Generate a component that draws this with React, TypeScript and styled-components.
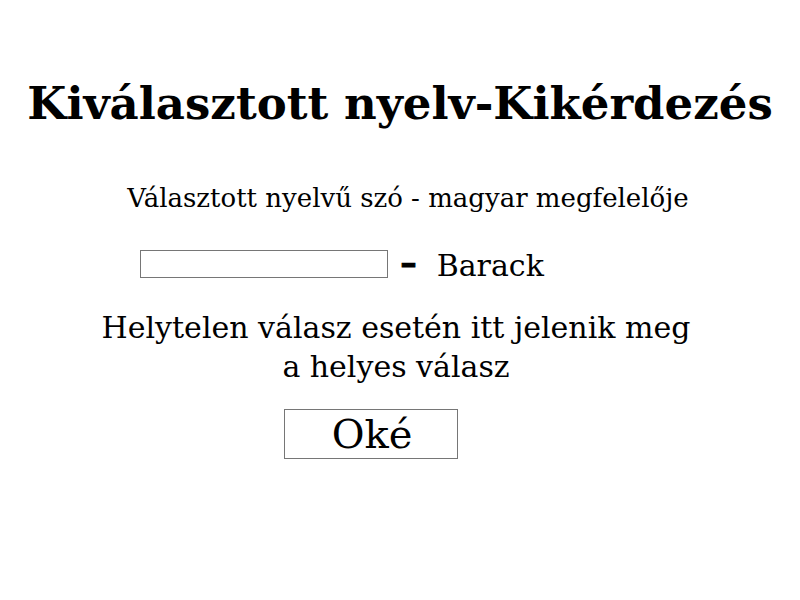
import React from 'react';
import styled, { createGlobalStyle } from 'styled-components';

const GlobalStyle = createGlobalStyle`
    html, body {
        margin: 0;
        padding: 0;
        background: #fff;
    }
    body {
        font-family: "DejaVu Serif", serif;
        color: #000;
    }
`;

const Page = styled.div`
    width: 800px;
    height: 600px;
    display: flex;
    flex-direction: column;
    align-items: center;
`;

const Title = styled.h1`
    margin: 78px 0 0;
    font-size: 45px;
    font-weight: bold;
    line-height: 52px;
    white-space: nowrap;
`;

const Subtitle = styled.p`
    margin: 53px 0 0 16px;
    font-size: 26px;
    line-height: 30px;
`;

const AnswerRow = styled.div`
    margin: 33px 116px 0 0;
    height: 35px;
    display: flex;
    align-items: center;
    font-size: 30px;
    line-height: 35px;
`;

const AnswerInput = styled.input`
    width: 248px;
    height: 28px;
    box-sizing: border-box;
    border: 1px solid #767676;
    border-radius: 0;
    padding: 0 4px;
    font-size: 16px;
`;

const Dash = styled.span`
    margin: 0 0 3px 12px;
    font-size: 33px;
    line-height: 35px;
    font-weight: bold;
    -webkit-text-stroke: 0.8px #000;
`;

const Word = styled.span`
    margin: 3px 0 0 20px;
`;

const Feedback = styled.p`
    margin: 27px 8px 0 0;
    font-size: 30px;
    line-height: 39px;
    text-align: center;
`;

const OkButton = styled.button`
    margin: 23px 58px 0 0;
    width: 174px;
    height: 50px;
    box-sizing: border-box;
    border: 1px solid #767676;
    background: #fff;
    font-family: "DejaVu Serif", serif;
    font-size: 40px;
    line-height: 48px;
    color: #000;
    padding: 0 0 0 2px;
`;

const App: React.FC = () => {
    return <>
        <GlobalStyle />
        <Page>
            <Title>Kiválasztott nyelv-Kikérdezés</Title>
            <Subtitle>Választott nyelvű szó - magyar megfelelője</Subtitle>
            <AnswerRow>
                <AnswerInput type="text" />
                <Dash>–</Dash>
                <Word>Barack</Word>
            </AnswerRow>
            <Feedback>Helytelen válasz esetén itt jelenik meg<br />a helyes válasz</Feedback>
            <OkButton>Oké</OkButton>
        </Page>
    </>
}

export default App;
